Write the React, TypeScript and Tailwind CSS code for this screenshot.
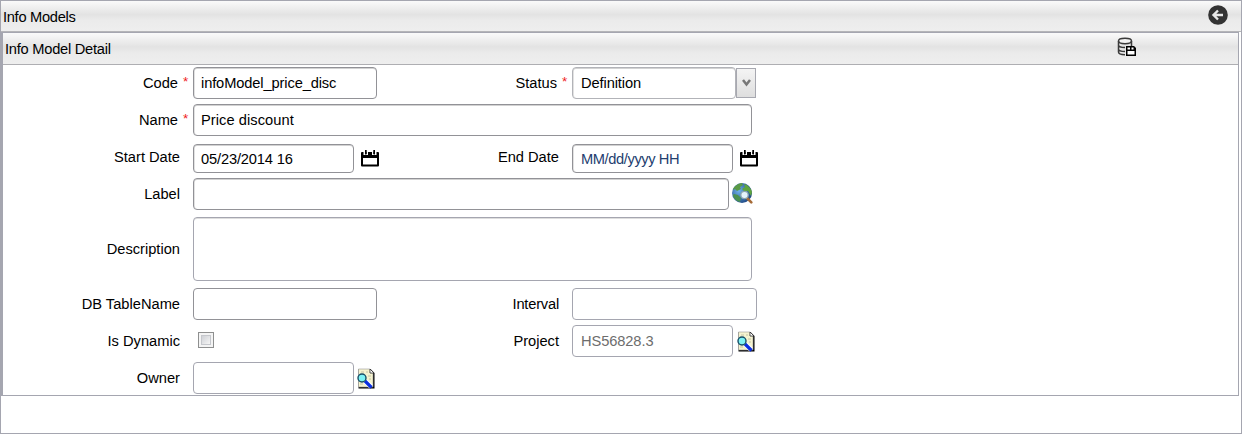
import React from "react";

const header = "flex shrink-0 items-center bg-[linear-gradient(#fafafa,#e3e3e3_45%,#ebebeb_65%,#eeeeee)] tracking-[-0.25px]";
const field = "box-border shrink-0 rounded-[4px] border bg-white text-[14.67px] leading-[18px] outline-none";
const dark = "border-[#929297] shadow-[inset_0_1px_0_#d2d2d2,inset_1px_0_0_#e2e2e2]";
const plain = "border-[#a5a6b0]";

function Label({ children, required, w }: { children: string; required?: boolean; w: string }) {
  return (
    <div className={`flex shrink-0 justify-end whitespace-pre leading-[18px] ${w}`}>
      <span>{children}</span>
      {required ? <span className="-mt-px ml-[5px] w-[6px] text-[13.5px] text-[#ef1c1c]">*</span> : <span className="w-[2px]" />}
    </div>
  );
}

function Calendar() {
  return (
    <svg className="shrink-0" width="18" height="17" viewBox="0 0 18 17">
      <rect x="0" y="2" width="18" height="14.500" rx="1" fill="#000" />
      <path d="M2 8h14v6.500H2z" fill="#fff" />
      <path d="M2.500 1.500h1.500v3h1.500v-3H7V5H2.500zM11 1.500h1.500v3H14v-3h1.500V5H11z" fill="#fff" />
      <path d="M4 0h1.700v4H4zM12.300 0H14v4h-1.700z" fill="#000" />
    </svg>
  );
}

function Lookup() {
  return (
    <svg className="shrink-0" width="18" height="21" viewBox="0 0 18 21">
      <path d="M1.500 1h12l4 4v15.500h-16z" fill="#000" />
      <path d="M1.500 1h11.500v4h3v14h-14.500z" fill="#f5f3cf" stroke="#999" strokeWidth=".6" />
      <path d="M13 1l4 4h-4z" fill="#fff" stroke="#222" strokeWidth=".7" />
      <path d="M4 4h3M9 4h2M3 16h3M11 8h3M12 11h2" stroke="#c4c2a6" />
      <path d="M8 13l6 5.500" stroke="#fff" strokeWidth="5" />
      <path d="M8 13l6.500 6.500" stroke="#0b2fe0" strokeWidth="3.200" />
      <circle cx="5" cy="10" r="4" fill="#7df3f5" stroke="#174d66" strokeWidth="1.400" />
    </svg>
  );
}

function Globe() {
  return (
    <svg className="shrink-0" width="21" height="21" viewBox="0 0 21 21">
      <defs>
        <radialGradient id="sea" cx=".35" cy=".4" r=".7">
          <stop offset="0" stopColor="#6fb2ea" />
          <stop offset="1" stopColor="#1b437f" />
        </radialGradient>
      </defs>
      <circle cx="10" cy="10" r="10" fill="url(#sea)" />
      <path d="M4 2.500C6 1 8 0 10 0l1 2-3 2 1 2-4 2-2-2-2 1C1 5 3 3 4 2.500z" fill="#5a9a45" />
      <path d="M12 1c4 1 7 4 8 8l-1 4-3-5-4 0-2-2 3-2z" fill="#5fa43f" />
      <path d="M2 11l4 1 3 3-1 4C4 18 1.500 15 1 12z" fill="#4b9150" />
      <path d="M15 15l4.300 4.300" stroke="#a66b37" strokeWidth="2.600" strokeLinecap="round" />
      <circle cx="12.500" cy="12" r="3.700" fill="#e4f3fc" stroke="#8ba4ae" strokeWidth="1.300" />
    </svg>
  );
}

export default function App() {
  return (
    <div className="flex h-[434px] w-[1242px] flex-col border border-[#a5a6b0] bg-white font-['Liberation_Sans',Arial,sans-serif] text-[14.67px] leading-[18px] text-black">
      <header className={`${header} h-[31px] justify-between border-b border-[#b5b5b8] pr-[13px] pl-[2px]`}>
        <h1 className="mt-[2px] tracking-[-0.3px]">Info Models</h1>
        <svg className="mb-[2px]" width="20" height="20" viewBox="0 0 20 20">
          <circle cx="10" cy="10" r="9.800" fill="#333" />
          <path d="M15 10H6M10 5.500L5.500 10l4.500 4.500" fill="none" stroke="#e8e8e8" strokeWidth="2.400" />
        </svg>
      </header>
      <section className="mr-[2px] flex h-[364px] flex-col border border-l-2 border-[#a5a6b0]">
        <div className={`${header} h-[32px] justify-between border-b border-[#aeaeb2] pr-[101px] pl-[2px]`}>
          <h2>Info Model Detail</h2>
          <svg className="mb-1" width="20" height="20" viewBox="0 0 20 20">
            <g fill="none" stroke="#3a3a3a" strokeWidth="1.500">
              <ellipse cx="8" cy="4" rx="6.500" ry="2.700" fill="#f5f5f5" />
              <path d="M1.500 4v11c0 1.500 3 2.700 6.500 2.700M14.500 4v5M1.500 8c0 1.500 3 2.500 6.500 2.500M1.500 12c0 1.500 3 2.500 6.500 2.500" />
            </g>
            <path d="M9 9h8l2 2v8H9z" fill="#000" />
            <path d="M10.500 14h7v3.500h-7zM10.500 10.500h2.500v2h-2.500zM14.500 10.500h2v2h-2z" fill="#fff" />
          </svg>
        </div>
        <div className="-mt-px flex flex-col">
          <div className="flex h-[37px] items-center">
            <Label w="w-[186px]" required>Code</Label>
            <input className={`${field} ${dark} ml-[4px] h-8 w-[184px] px-[7px] tracking-[-0.12px]`} defaultValue="infoModel_price_disc" />
            <Label w="w-[191px]" required>Status</Label>
            <div className="ml-[4px] flex items-center">
              <input className={`${field} border-[#b2b3b8] shadow-[inset_0_1px_0_#d2d2d2,inset_1px_0_0_#e2e2e2] h-8 w-[164px] px-[8px] tracking-[-0.1px]`} defaultValue="Definition" />
              <button className="flex h-[30px] w-5 items-center justify-center border border-[#a7a8b0] bg-[linear-gradient(#f4f4f4,#dedede)]">
                <svg width="9" height="8" viewBox="0 0 9 8"><path d="M1 1l3.500 4.500L8 1" fill="none" stroke="#777" strokeWidth="2.500" /></svg>
              </button>
            </div>
          </div>
          <div className="flex h-[37px] items-center">
            <Label w="w-[186px]" required>Name</Label>
            <input className={`${field} ${dark} ml-[4px] h-8 w-[559px] px-[7px] tracking-[0.05px]`} defaultValue="Price discount" />
          </div>
          <div className="flex h-[37px] items-center">
            <Label w="w-[179px]">Start Date</Label>
            <input className={`${field} ${dark} mt-[4px] ml-[11px] h-[29px] w-[161px] px-[7px] tracking-[-0.15px]`} defaultValue="05/23/2014 16" />
            <div className="mt-[3px] ml-[7px]"><Calendar /></div>
            <Label w="w-[182px]">End Date</Label>
            <input className={`${field} ${dark} mt-[4px] ml-[11px] h-[29px] w-[161px] px-[8px] tracking-[-0.4px] text-[#24406f]`} defaultValue="MM/dd/yyyy HH" />
            <div className="mt-[3px] ml-[7px]"><Calendar /></div>
          </div>
          <div className="flex h-[37px] items-center">
            <Label w="w-[179px]">Label</Label>
            <input className={`${field} ${dark} ml-[11px] h-8 w-[536px]`} />
            <div className="ml-[3px]"><Globe /></div>
          </div>
          <div className="flex h-[73px] items-center">
            <Label w="w-[179px]">Description</Label>
            <textarea className={`${field} ${plain} ml-[11px] h-16 w-[559px] resize-none shadow-[inset_0_1px_0_#dedede]`} />
          </div>
          <div className="flex h-[37px] items-center">
            <Label w="w-[179px]">DB TableName</Label>
            <input className={`${field} border-[#929297] ml-[11px] h-8 w-[184px]`} />
            <Label w="w-[184px] tracking-[-0.2px]">Interval</Label>
            <input className={`${field} ${plain} ml-[11px] h-8 w-[185px]`} />
          </div>
          <div className="flex h-[37px] items-center">
            <Label w="w-[179px]">Is Dynamic</Label>
            <div className="-mt-[2px] ml-[16px] size-4 border border-[#8e8f8f] bg-[#f4f4f4] p-[2px]"><div className="size-full border border-[#c5c7cc] bg-[linear-gradient(135deg,#cfd1d6,#f5f5f5)]" /></div>
            <Label w="w-[347px]">Project</Label>
            <input className={`${field} ${plain} ml-[11px] h-8 w-[161px] px-[8px] tracking-[-0.1px] text-[#6d6d6d]`} defaultValue="HS56828.3" />
            <div className="mt-px ml-[4px]"><Lookup /></div>
          </div>
          <div className="flex h-[35px] items-center pt-[3px]">
            <Label w="w-[179px]">Owner</Label>
            <input className={`${field} ${plain} ml-[11px] h-8 w-[161px]`} />
            <div className="ml-[3px]"><Lookup /></div>
          </div>
        </div>
      </section>
    </div>
  );
}
